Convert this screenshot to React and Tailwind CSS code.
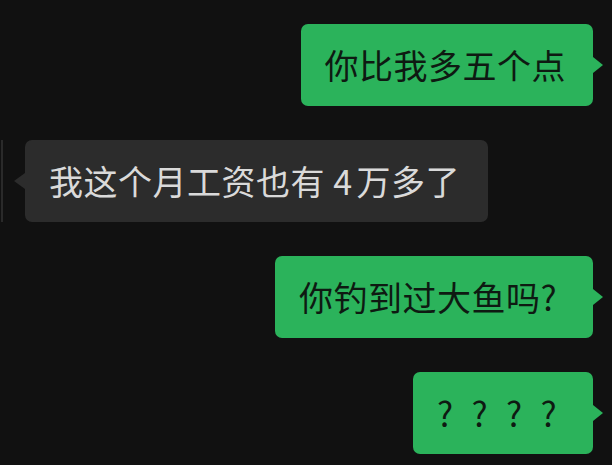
const messages = [
    { side: 'right', text: '你比我多五个点', pad: 'pr-[27px]' },
    { side: 'left', text: '我这个月工资也有 4万多了', pad: 'pr-[28px]' },
    { side: 'right', text: '你钓到过大鱼吗?', pad: 'pr-[18px]' },
    { side: 'right', text: '????', pad: 'pr-[18px]' },
];

// a "?" sits at the left of a full-width box, like the phone's CJK font draws it
function Text({ text }) {
    return text.split('').map((ch, i) =>
        ch === '?' ? (
            <span key={i} className="inline-block w-[34.5px]">?</span>
        ) : ch === '4' ? (
            <span key={i} className="mr-[4px]">{ch}</span>
        ) : (
            <span key={i}>{ch}</span>
        )
    );
}

function Bubble({ side, text, pad }) {
    const mine = side === 'right';
    const body = (
        <div
            className={`flex h-[82px] items-center whitespace-pre rounded-[7px] pl-[24px] ${pad} text-[34px] leading-none tracking-[0.5px] ${
                mine ? 'bg-[#2bb35b] text-[#0e1a12]' : 'bg-[#2c2c2c] text-[#dadada]'
            }`}
        >
            <span>
                <Text text={text} />
            </span>
        </div>
    );

    if (mine) {
        return (
            <div className="flex items-center justify-end pr-[9px]">
                {body}
                <span className="h-0 w-0 border-y-[8px] border-l-[10px] border-y-transparent border-l-[#2bb35b]" />
            </div>
        );
    }

    return (
        <div className="flex items-center pl-[1px]">
            {/* edge of the sender's avatar */}
            <div className="h-[82px] w-[2px] bg-[#2a2a2a]" />
            <span className="ml-[11px] h-0 w-0 border-y-[8px] border-r-[11px] border-y-transparent border-r-[#2c2c2c]" />
            {body}
        </div>
    );
}

export default function App() {
    return (
        <div
            className="flex h-[465px] w-[612px] flex-col gap-[34px] overflow-hidden bg-[#111111] pt-[24px]"
            style={{ fontFamily: '"Noto Sans CJK SC", "Noto Sans", sans-serif' }}
        >
            {messages.map((m, i) => (
                <Bubble key={i} side={m.side} text={m.text} pad={m.pad} />
            ))}
        </div>
    );
}
